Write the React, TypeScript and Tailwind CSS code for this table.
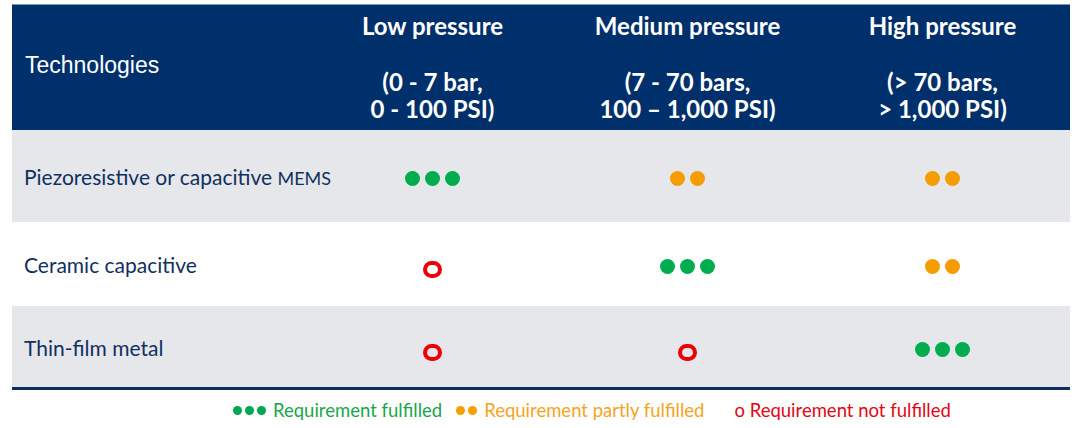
import React from "react";

type Rating = "full" | "partial" | "none";

const columns = [
  { title: "Low pressure", range: ["(0 - 7 bar,", "0 - 100 PSI)"] },
  { title: "Medium pressure", range: ["(7 - 70 bars,", "100 \u2013 1,000 PSI)"] },
  { title: "High pressure", range: ["(> 70 bars,", "> 1,000 PSI)"] },
];

const rows: { label: React.ReactNode; ratings: Rating[]; height: string; bg: string }[] = [
  {
    label: (
      <span className="whitespace-nowrap">
        Piezoresistive or capacitive <span className="text-[18px]">MEMS</span>
      </span>
    ),
    ratings: ["full", "partial", "partial"],
    height: "h-[92px]",
    bg: "bg-[#e6e7eb]",
  },
  { label: "Ceramic capacitive", ratings: ["none", "full", "partial"], height: "h-[84px]", bg: "bg-white" },
  { label: "Thin-film metal", ratings: ["none", "none", "full"], height: "h-[81px]", bg: "bg-[#e6e7eb]" },
];

function Mark({ rating }: { rating: Rating }) {
  if (rating === "none") {
    return <span className="mt-[11px] block h-[17px] w-[19px] rounded-full border-4 border-[#ec0008]" />;
  }
  const count = rating === "full" ? 3 : 2;
  const color = rating === "full" ? "bg-[#00ad4e]" : "bg-[#f59d00]";
  return (
    <span className="mt-[5px] flex gap-[5px]">
      {Array.from({ length: count }).map((_, i) => (
        <span key={i} className={`block h-[15px] w-[15px] rounded-full ${color}`} />
      ))}
    </span>
  );
}

function SmallDots({ count, color }: { count: number; color: string }) {
  return (
    <span className="mr-[7px] flex gap-[3px]">
      {Array.from({ length: count }).map((_, i) => (
        <span key={i} className={`block h-[9px] w-[9px] rounded-full ${color}`} />
      ))}
    </span>
  );
}

export default function App() {
  return (
    <div className="h-[428px] w-[1080px] bg-white pl-[12px] pt-[4px] font-['Lato',sans-serif]">
      <div className="w-[1058px]">
        {/* header */}
        <div className="grid h-[126px] grid-cols-[293px_255px_255px_255px] border-t border-[#7f95b8] bg-[#00306b] text-white">
          <div className="flex items-center pl-[13px] pb-[4px] font-['Liberation_Sans',sans-serif] text-[23px]">
            Technologies
          </div>
          {columns.map((c) => (
            <div key={c.title} className="pt-[7px] text-center text-[24px] font-bold leading-[27px]">
              <div>{c.title}</div>
              <div>&nbsp;</div>
              <div className="mt-[2px]">{c.range[0]}</div>
              <div>{c.range[1]}</div>
            </div>
          ))}
        </div>

        {/* body */}
        {rows.map((r, idx) => (
          <div key={idx} className={`grid grid-cols-[293px_255px_255px_255px] ${r.height} ${r.bg}`}>
            <div className="flex items-center pl-[12px] pt-[2px] text-[21px] text-[#10305f]">{r.label}</div>
            {r.ratings.map((rt, i) => (
              <div key={i} className="flex items-center justify-center">
                <Mark rating={rt} />
              </div>
            ))}
          </div>
        ))}
        <div className="h-[3px] bg-[#0c2f5f]" />

        {/* legend */}
        <div className="mt-[8px] flex items-center pl-[221px] text-[18.5px] leading-[24px]">
          <SmallDots count={3} color="bg-[#00a651]" />
          <span className="text-[#19a64a]">Requirement fulfilled</span>
          <span className="ml-[14px]" />
          <SmallDots count={2} color="bg-[#f5a000]" />
          <span className="text-[#f5a31f]">Requirement partly fulfilled</span>
          <span className="ml-[30px] text-[#e30613]">o Requirement not fulfilled</span>
        </div>
      </div>
    </div>
  );
}
